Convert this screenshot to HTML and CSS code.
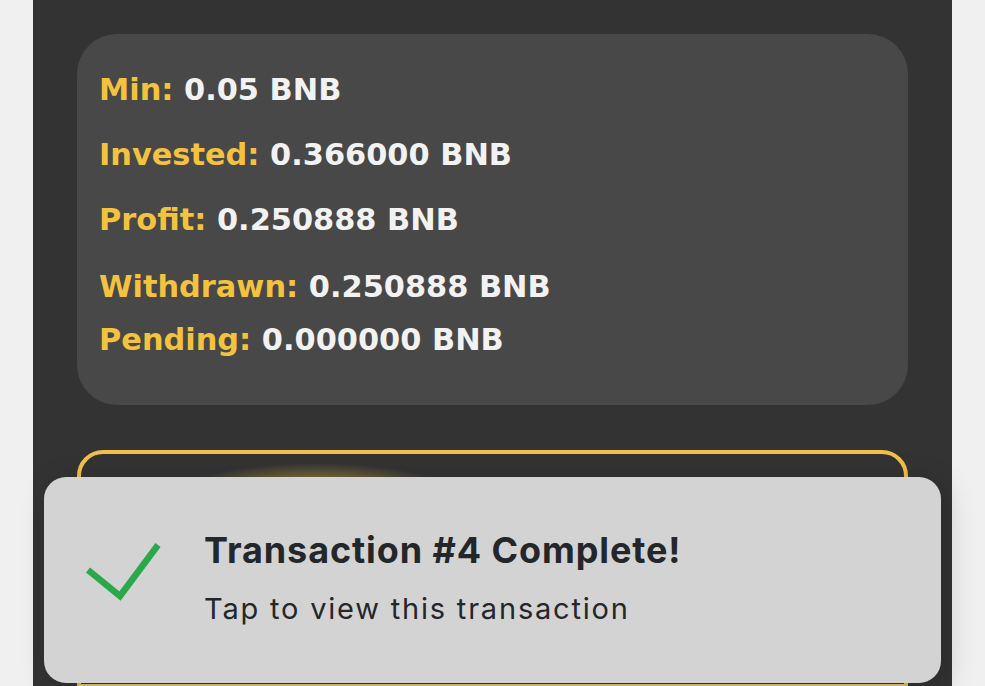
FILE: index.html
```html
<!DOCTYPE html>
<html>
<head>
<meta charset="utf-8">
<link rel="stylesheet" href="styles.css">
</head>
<body>
<div class="page">
  <div class="panel">
    <div class="card">
      <div class="row"><span class="label">Min:</span> 0.05 BNB</div>
      <div class="row"><span class="label">Invested:</span> 0.366000 BNB</div>
      <div class="row"><span class="label">Profit:</span> 0.250888 BNB</div>
      <div class="row r4"><span class="label">Withdrawn:</span> 0.250888 BNB</div>
      <div class="row r5"><span class="label">Pending:</span> 0.000000 BNB</div>
    </div>
    <div class="action">
      <div class="glow"></div>
      <div class="btn">WITHDRAW</div>
    </div>
  </div>
  <div class="toast">
    <svg class="check" width="80" height="60" viewBox="0 0 80 60">
      <path d="M2 29 L34 55 L72 4" fill="none" stroke="#2aa84a" stroke-width="6.5" stroke-linecap="butt" stroke-linejoin="miter"/>
    </svg>
    <div class="toast-text">
      <div class="toast-title">Transaction #4 Complete!</div>
      <div class="toast-sub">Tap to view this transaction</div>
    </div>
  </div>
</div>
</body>
</html>
```
FILE: styles.css
```css
html, body {
  margin: 0;
  padding: 0;
}
body {
  background: #f0f0f0;
  width: 985px;
  height: 686px;
  overflow: hidden;
}
.page {
  position: relative;
  width: 985px;
  height: 686px;
}
.panel {
  margin-left: 33px;
  width: 919px;
  height: 686px;
  background: #333333;
  overflow: hidden;
  padding-top: 34px;
  box-sizing: border-box;
}
.card {
  margin: 0 44px;
  height: 371px;
  box-sizing: border-box;
  background: #484848;
  border-radius: 40px;
  padding: 23px 22px 0;
  font-family: "DejaVu Sans", sans-serif;
  font-weight: 700;
  font-size: 30.4px;
  color: #f2f2f2;
}
.row {
  line-height: 65px;
  white-space: nowrap;
}
.r4 { margin-top: 2px; }
.r5 { margin-top: -12px; }
.label {
  color: #f3c23e;
}
.action {
  position: relative;
  margin: 45px 44px 0;
  height: 300px;
  border: 4px solid #f0c04a;
  border-radius: 26px;
  padding-top: 230px;
  box-sizing: border-box;
  overflow: hidden;
}
.glow {
  position: absolute;
  left: 95px;
  top: 0;
  width: 280px;
  height: 60px;
  background: radial-gradient(ellipse 50% 55% at 50% 70%, rgba(240, 190, 70, 0.85) 0%, rgba(240, 190, 70, 0.4) 50%, rgba(240, 190, 70, 0) 100%);
}
.btn {
  margin: 0 -4px;
  height: 60px;
  background: #e8c67a;
  color: #1c1c1c;
  font-family: "Open Sans", sans-serif;
  font-weight: 800;
  font-size: 34px;
  line-height: 60px;
  text-align: center;
  letter-spacing: 4px;
}
.toast {
  position: absolute;
  left: 44px;
  top: 477px;
  width: 897px;
  height: 206px;
  background: #d3d3d3;
  border-radius: 22px;
  box-shadow: 6px 6px 30px rgba(0, 0, 0, 0.18);
  display: flex;
  align-items: flex-start;
  box-sizing: border-box;
  padding: 64px 0 0 42px;
}
.check {
  flex: none;
}
.toast-text {
  margin-left: 38px;
  font-family: "Inter", sans-serif;
  color: #24272a;
  white-space: nowrap;
}
.toast-title {
  font-weight: 700;
  font-size: 36px;
  line-height: 40px;
  letter-spacing: 0.9px;
  margin-top: -11px;
}
.toast-sub {
  font-weight: 400;
  font-size: 29px;
  line-height: 36px;
  letter-spacing: 1.8px;
  margin-top: 21px;
}
```
